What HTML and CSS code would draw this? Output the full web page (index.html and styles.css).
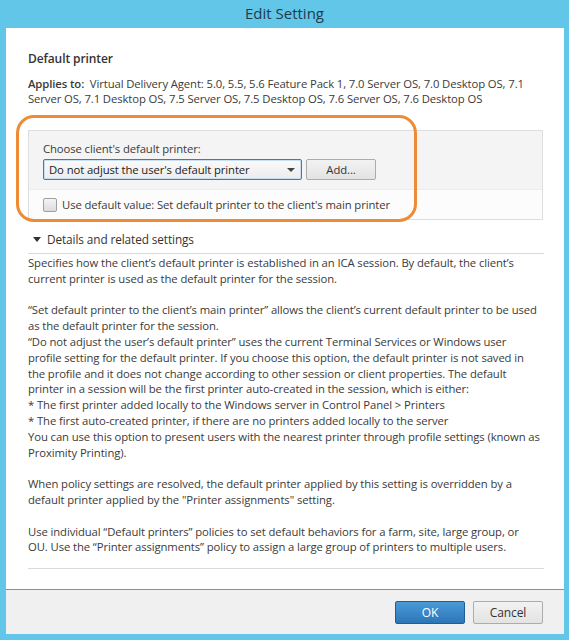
FILE: index.html
```html
<!DOCTYPE html>
<html lang="en">
<head>
    <meta charset="UTF-8">
    <title>Edit Setting</title>
    <link rel="stylesheet" href="styles.css">
</head>
<body>
    <div class="window">
        <div class="titlebar">Edit Setting</div>

        <div class="frame">
            <div class="content">
                <h2 class="setting-name">Default printer</h2>
                <p class="applies"><b>Applies to:</b>&nbsp; Virtual Delivery Agent: 5.0, 5.5, 5.6 Feature Pack 1, 7.0 Server OS, 7.0 Desktop OS, 7.1 Server OS, 7.1 Desktop OS, 7.5 Server OS, 7.5 Desktop OS, 7.6 Server OS, 7.6 Desktop OS</p>

                <div class="panel">
                    <div class="panel-top">
                        <label class="field-label">Choose client's default printer:</label>
                        <div class="field-row">
                            <div class="dropdown">
                                <span>Do not adjust the user's default printer</span>
                                <span class="caret"></span>
                            </div>
                            <div class="btn">Add...</div>
                        </div>
                    </div>
                    <div class="panel-bottom">
                        <span class="checkbox"></span>
                        <span>Use default value: Set default printer to the client's main printer</span>
                    </div>
                    <!-- orange annotation ring drawn over the panel -->
                    <div class="highlight"></div>
                </div>

                <div class="details-toggle">
                    <span class="arrow"></span>
                    <span>Details and related settings</span>
                </div>

                <div class="details">
                    <p>Specifies how the client’s default printer is established in an ICA session. By default, the client’s<br>
                    current printer is used as the default printer for the session.</p>
                    <p>“Set default printer to the client’s main printer” allows the client’s current default printer to be used<br>
                    as the default printer for the session.<br>
                    “Do not adjust the user’s default printer” uses the current Terminal Services or Windows user<br>
                    profile setting for the default printer. If you choose this option, the default printer is not saved in<br>
                    the profile and it does not change according to other session or client properties. The default<br>
                    printer in a session will be the first printer auto-created in the session, which is either:<br>
                    * The first printer added locally to the Windows server in Control Panel &gt; Printers<br>
                    * The first auto-created printer, if there are no printers added locally to the server<br>
                    You can use this option to present users with the nearest printer through profile settings (known as<br>
                    Proximity Printing).</p>
                    <p>When policy settings are resolved, the default printer applied by this setting is overridden by a<br>
                    default printer applied by the "Printer assignments" setting.</p>
                    <p>Use individual “Default printers” policies to set default behaviors for a farm, site, large group, or<br>
                    OU. Use the “Printer assignments” policy to assign a large group of printers to multiple users.</p>
                </div>
            </div>

            <div class="footer">
                <div class="btn btn-primary">OK</div>
                <div class="btn btn-footer">Cancel</div>
            </div>
        </div>
    </div>
</body>
</html>
```

FILE: styles.css
```css
body {
    margin: 0;
    background-color: #62c6e8;
    font-family: "Open Sans", "Noto Sans", sans-serif;
    font-size: 11.3px;
    letter-spacing: -0.1px;
    color: #3a3a3a;
}

.window {
    height: 640px;
    display: flex;
    flex-direction: column;
}

.titlebar {
    height: 28px;
    line-height: 27px;
    text-align: center;
    font-size: 15px;
    letter-spacing: 0;
    color: #1d3b4c;
}

.frame {
    flex: 1;
    display: flex;
    flex-direction: column;
    padding: 0 5px 6px 6px;
}

.content {
    flex: 1;
    background-color: #fff;
    padding: 22px 22px 0 22px;
    border-bottom: 1px solid #8e8e8e;
}

.setting-name {
    font-size: 12px;
    font-weight: 600;
    margin: 0 0 9px 0;
    color: #333;
}

.applies {
    margin: 0 0 24px 0;
    line-height: 15px;
}

.applies b {
    font-weight: 600;
}

.panel {
    position: relative;
    margin-right: -1px;
    border: 1px solid #dedede;
}

.panel-top {
    background-color: #f4f4f4;
    padding: 10px 14px 9px 14px;
}

.field-label {
    display: block;
    margin-bottom: 3px;
}

.field-row {
    display: flex;
    gap: 4px;
}

.dropdown {
    width: 246px;
    height: 19px;
    border: 1px solid #3b7cb6;
    border-radius: 2px;
    box-shadow: inset 0 0 0 1px #c9def0;
    background: linear-gradient(#fafafa, #ececec);
    display: flex;
    align-items: center;
    justify-content: space-between;
    padding: 0 6px 0 5px;
    color: #222;
}

.caret {
    width: 0;
    height: 0;
    border-left: 4px solid transparent;
    border-right: 4px solid transparent;
    border-top: 4px solid #444;
}

.btn {
    height: 19px;
    line-height: 19px;
    border: 1px solid #acacac;
    border-radius: 2px;
    background: linear-gradient(#f2f2f2, #e3e3e3);
    text-align: center;
    color: #333;
}

.field-row .btn {
    width: 68px;
}

.panel-bottom {
    background-color: #fcfcfc;
    border-top: 1px solid #ececec;
    padding: 7px 14px 7px 14px;
    display: flex;
    align-items: center;
    gap: 5px;
}

.checkbox {
    width: 12px;
    height: 12px;
    border: 1px solid #a0a0a0;
    border-radius: 2px;
    background: linear-gradient(#f4f4f4, #dcdcdc);
}

.highlight {
    position: absolute;
    left: -13px;
    top: -16px;
    width: 395px;
    height: 101px;
    border: 3px solid #ee8b36;
    border-radius: 18px;
}

.details-toggle {
    display: flex;
    align-items: center;
    gap: 6px;
    padding: 11px 0 6px 5px;
    border-bottom: 1px solid #d9d9d9;
    margin-right: -2px;
    font-size: 11.8px;
    color: #333;
}

.arrow {
    width: 0;
    height: 0;
    border-left: 4px solid transparent;
    border-right: 4px solid transparent;
    border-top: 5px solid #333;
}

.details {
    padding-top: 1px;
    line-height: 15.8px;
    border-bottom: 1px solid #dadada;
    margin-right: -2px;
    padding-bottom: 13px;
}

.details p {
    margin: 0 0 15.8px 0;
}

.details p:last-child {
    margin-bottom: 0;
}

.footer {
    height: 44px;
    background-color: #f0f0f0;
    display: flex;
    justify-content: flex-end;
    align-items: center;
    gap: 8px;
    padding-right: 21px;
}

.footer .btn {
    width: 68px;
    height: 21px;
    line-height: 21px;
    font-size: 12px;
}

.btn-primary {
    background: linear-gradient(#4a9ad6, #2c76b8);
    border-color: #1f5f98;
    color: #fff;
}
```
